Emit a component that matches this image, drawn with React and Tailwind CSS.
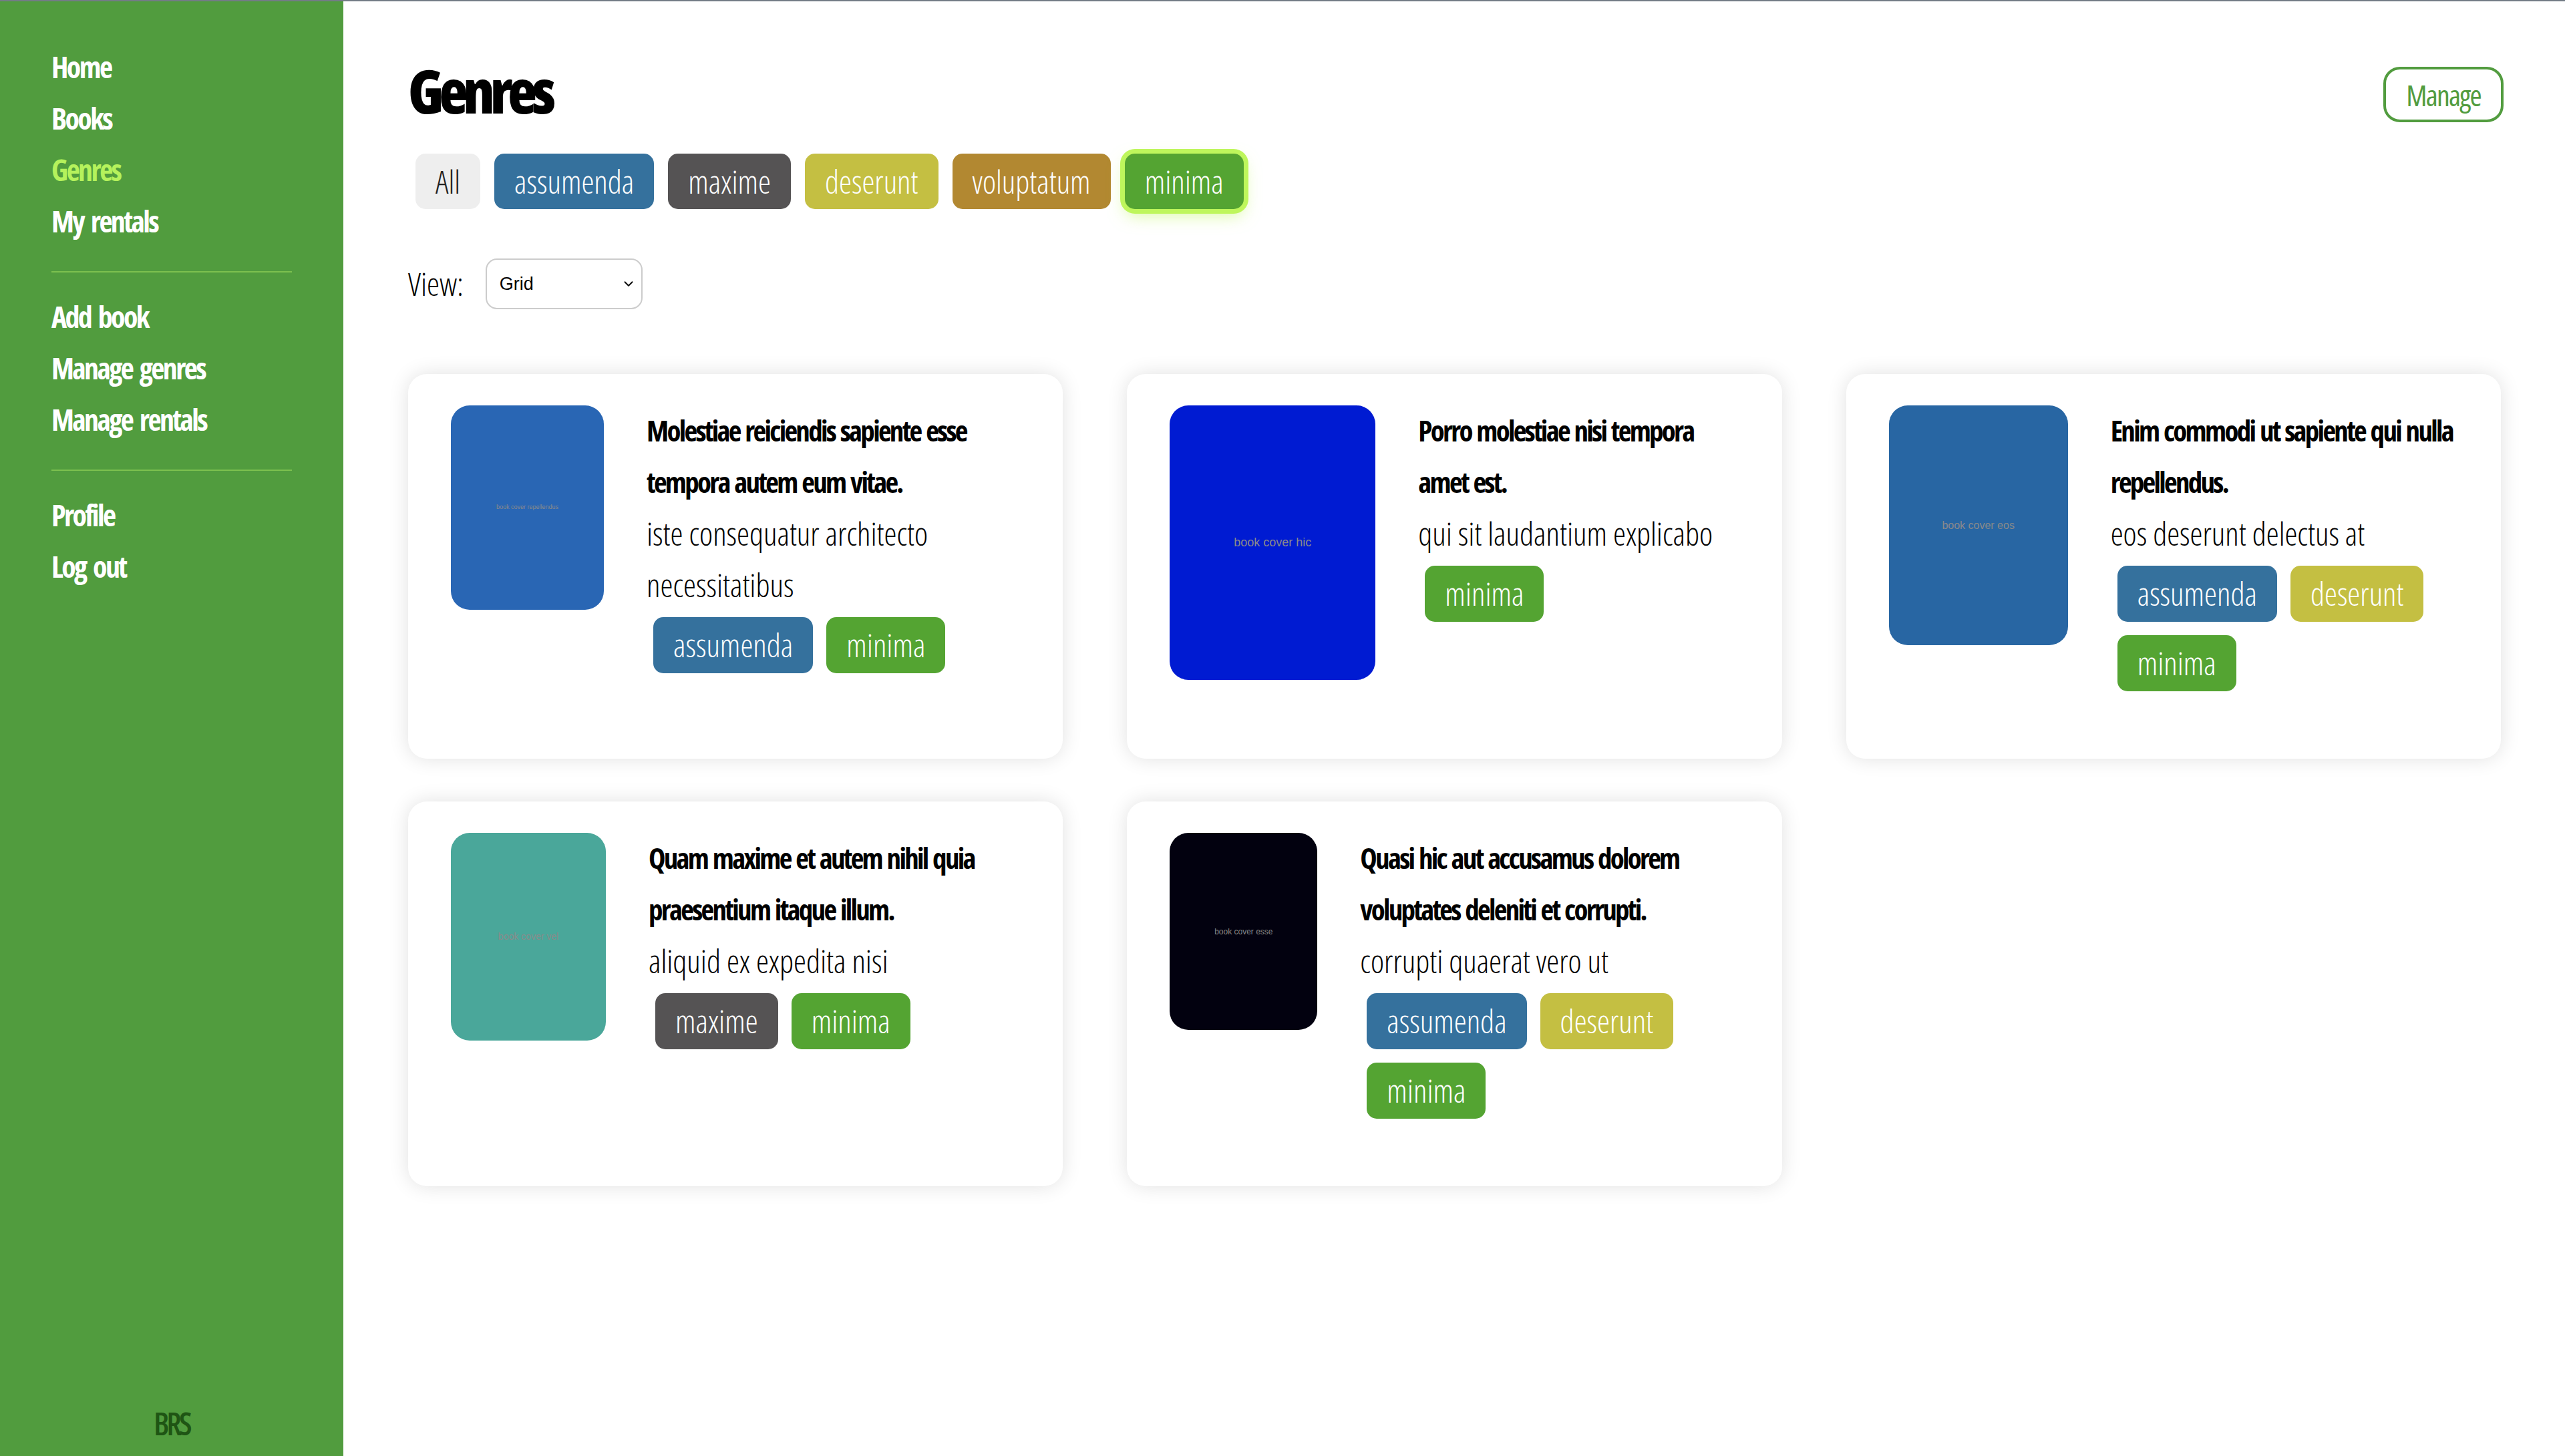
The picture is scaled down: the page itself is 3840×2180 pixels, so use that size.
import React from 'react';
import { ChevronDown } from 'lucide-react';

const genres = [
  { name: 'assumenda', color: 'bg-[#35719d]' },
  { name: 'maxime', color: 'bg-[#555354]' },
  { name: 'deserunt', color: 'bg-[#c4bf42]' },
  { name: 'voluptatum', color: 'bg-[#b28831]' },
  { name: 'minima', color: 'bg-[#54a432]' },
];

const tagColor = {
  assumenda: 'bg-[#35719d]',
  maxime: 'bg-[#555354]',
  deserunt: 'bg-[#c4bf42]',
  voluptatum: 'bg-[#b28831]',
  minima: 'bg-[#54a432]',
};

const books = [
  {
    title: 'Molestiae reiciendis sapiente esse tempora autem eum vitae.',
    author: 'iste consequatur architecto necessitatibus',
    cover: { bg: '#2966b4', w: 229, h: 306, text: 'book cover repellendus', size: 9 },
    tags: ['assumenda', 'minima'],
  },
  {
    title: 'Porro molestiae nisi tempora amet est.',
    author: 'qui sit laudantium explicabo',
    cover: { bg: '#001bd2', w: 308, h: 411, text: 'book cover hic', size: 18 },
    tags: ['minima'],
  },
  {
    title: 'Enim commodi ut sapiente qui nulla repellendus.',
    author: 'eos deserunt delectus at',
    cover: { bg: '#2866a3', w: 268, h: 359, text: 'book cover eos', size: 16 },
    tags: ['assumenda', 'deserunt', 'minima'],
  },
  {
    title: 'Quam maxime et autem nihil quia praesentium itaque illum.',
    author: 'aliquid ex expedita nisi',
    cover: { bg: '#4aa79a', w: 232, h: 311, text: 'book cover vel', size: 14 },
    tags: ['maxime', 'minima'],
  },
  {
    title: 'Quasi hic aut accusamus dolorem voluptates deleniti et corrupti.',
    author: 'corrupti quaerat vero ut',
    cover: { bg: '#02010f', w: 221, h: 295, text: 'book cover esse', size: 12 },
    tags: ['assumenda', 'deserunt', 'minima'],
  },
];

function Sidebar() {
  const main = ['Home', 'Books', 'Genres', 'My rentals'];
  const admin = ['Add book', 'Manage genres', 'Manage rentals'];
  const user = ['Profile', 'Log out'];
  const item = (label) => (
    <a
      key={label}
      href="#"
      className={`block text-[44px] leading-[77px] font-bold tracking-[-0.06em] [word-spacing:0.12em] whitespace-nowrap ${
        label === 'Genres' ? 'text-[#b5f25c]' : 'text-white'
      }`}
    >
      {label}
    </a>
  );
  return (
    <aside className="w-[514px] shrink-0 bg-[#519c3e] flex flex-col px-[77px] pt-[60px] pb-[14px]">
      <nav className="flex flex-col">
        {main.map(item)}
        <hr className="mt-[36px] mb-[28px] border-0 border-t-2 border-[#7cc04f]" />
        {admin.map(item)}
        <hr className="mt-[36px] mb-[28px] border-0 border-t-2 border-[#7cc04f]" />
        {user.map(item)}
      </nav>
      <div className="mt-auto text-center text-[46px] font-semibold tracking-[-0.08em] text-[#1f5514]">BRS</div>
    </aside>
  );
}

function Tag({ name, className = '' }) {
  return (
    <span
      className={`inline-flex items-center h-[84px] px-[30px] rounded-[15px] text-white text-[48px] font-light ${tagColor[name]} ${className}`}
    >
      {name}
    </span>
  );
}

function BookCard({ book }) {
  const { cover } = book;
  return (
    <div className="h-[576px] bg-white rounded-[28px] shadow-[0_0_30px_rgba(0,0,0,0.12)] pt-[47px] px-[64px] flex items-start gap-[64px]">
      <div
        className="shrink-0 rounded-[28px] flex items-center justify-center text-[#8a8a8a] [font-family:'Liberation_Sans',Arial,sans-serif] [font-stretch:normal]"
        style={{ backgroundColor: cover.bg, width: cover.w, height: cover.h, fontSize: cover.size }}
      >
        {cover.text}
      </div>
      <div className="flex-1 min-w-0 -mt-[1px]">
        <h3 className="text-[43px] leading-[77px] font-bold tracking-[-0.063em] [word-spacing:0.06em] text-black">
          {book.title}
        </h3>
        <p className="text-[48px] leading-[77px] font-light text-black">{book.author}</p>
        <div className="flex flex-wrap">
          {book.tags.map((t) => (
            <Tag key={t} name={t} className="m-[10px]" />
          ))}
        </div>
      </div>
    </div>
  );
}

export default function App() {
  return (
    <div className="min-h-screen flex border-t-2 border-[#737c86] bg-white [font-family:'Open_Sans',sans-serif] [font-stretch:75%]">
      <Sidebar />
      <main className="flex-1 pl-[97px] pr-[96px] pt-[80px]">
        <div className="flex items-start justify-between">
          <h1 className="mt-[8px] text-[90px] leading-none font-extrabold tracking-[-0.08em] text-black">Genres</h1>
          <button className="mt-[18px] -mr-[4px] h-[83px] px-[30px] rounded-[25px] border-4 border-[#529c3f] text-[#529c3f] text-[44px] font-medium tracking-[-0.04em] bg-white">
            Manage
          </button>
        </div>

        <div className="mt-[47px] flex items-center gap-[21px] ml-[11px]">
          <span className="inline-flex items-center h-[83px] px-[30px] rounded-[15px] bg-[#eeeeee] text-[#222] text-[48px] font-light">
            All
          </span>
          {genres.map((g) => (
            <span
              key={g.name}
              className={`inline-flex items-center h-[83px] px-[30px] rounded-[15px] text-white text-[48px] font-light ${g.color} ${
                g.name === 'minima' ? 'shadow-[0_0_0_7px_#bef65c,0_10px_24px_rgba(190,246,92,0.55)]' : ''
              }`}
            >
              {g.name}
            </span>
          ))}
        </div>

        <div className="mt-[74px] flex items-center gap-[33px]">
          <span className="text-[48px] font-light text-black">View:</span>
          <div className="relative">
            <select
              defaultValue="grid"
              className="appearance-none w-[235px] h-[76px] pl-[19px] rounded-[17px] border-2 border-[#cccccc] bg-white text-[27px] text-black [font-family:'Liberation_Sans',Arial,sans-serif] [font-stretch:normal]"
            >
              <option value="grid">Grid</option>
              <option value="list">List</option>
            </select>
            <ChevronDown className="absolute right-[10px] top-1/2 -translate-y-1/2 w-[22px] h-[22px] text-black pointer-events-none" strokeWidth={2} />
          </div>
        </div>

        <div className="mt-[97px] grid grid-cols-3 gap-x-[96px] gap-y-[64px]">
          {books.map((b, i) => (
            <BookCard key={i} book={b} />
          ))}
        </div>
      </main>
    </div>
  );
}
